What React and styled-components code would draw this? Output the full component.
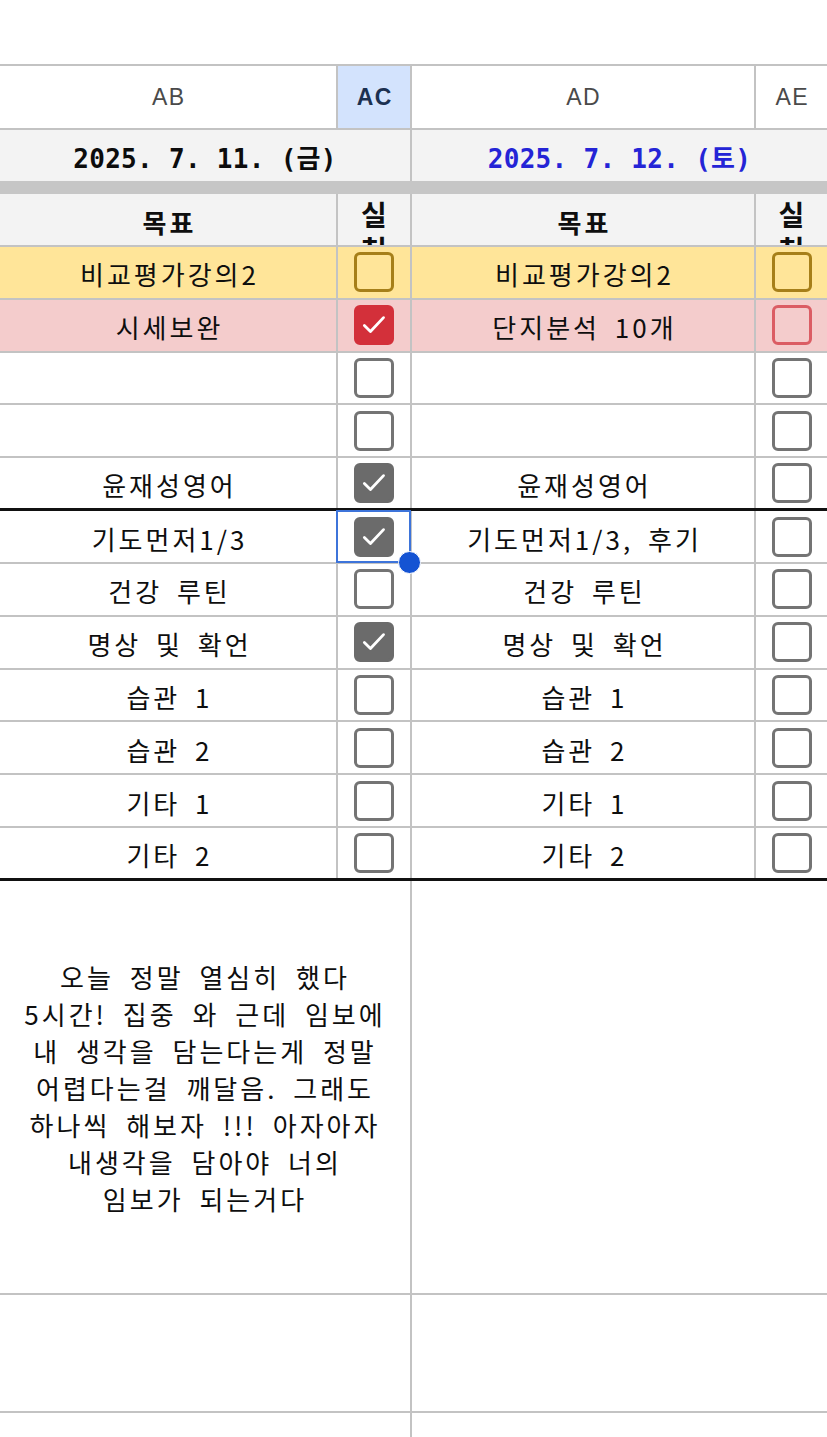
import React from 'react'
import styled, { createGlobalStyle } from 'styled-components'

const GRID = '#c3c3c3';

const GlobalStyle = createGlobalStyle`
  html, body {
    margin: 0;
    padding: 0;
    background: #fff;
  }
  body {
    font-family: "Noto Sans CJK KR", "Noto Sans", sans-serif;
    overflow: hidden;
  }
`;

const Sheet = styled.div`
  width: 827px;
  height: 1437px;
  padding-top: 64px;
  box-sizing: border-box;
  overflow: hidden;
  color: #0e0e0e;
`;

const Row = styled.div`
  display: grid;
  grid-template-columns: ${({ merged }) => (merged ? '412px 1fr' : '338px 74px 344px 1fr')};
  height: ${({ h }) => h}px;
  box-sizing: border-box;
  border-top: ${({ top }) => (top ? `2px solid ${GRID}` : 'none')};
  border-bottom: ${({ line }) =>
    line === 'black' ? '3px solid #111' : line === 'none' ? 'none' : `2px solid ${GRID}`};
  background: ${({ bg }) => bg || 'transparent'};
`;

const Cell = styled.div`
  position: relative;
  box-sizing: border-box;
  border-right: 2px solid ${GRID};
  display: flex;
  align-items: center;
  justify-content: center;
  background: ${({ bg }) => bg || 'transparent'};
  &:last-child {
    border-right: none;
  }
`;

const ColLetter = styled(Cell)`
  font-family: "Liberation Sans", Arial, sans-serif;
  font-size: 23px;
  letter-spacing: 1.5px;
  padding-left: 1.5px;
  color: ${({ active }) => (active ? '#1b3050' : '#4a4a4a')};
  font-weight: ${({ active }) => (active ? 700 : 400)};
  background: ${({ active }) => (active ? '#d3e3fd' : '#fff')};
`;

const DateCell = styled(Cell)`
  font-family: "DejaVu Sans Mono", "Noto Sans CJK KR", monospace;
  font-weight: 700;
  font-size: 26px;
  letter-spacing: 0.3px;
  padding-top: 2px;
  color: ${({ tone }) => tone || '#0c0c0c'};
  background: #f3f3f3;
`;

const Divider = styled.div`
  height: 13px;
  background: #c6c6c6;
`;

const Label = styled.span`
  font-size: 26px;
  letter-spacing: 3px;
  word-spacing: 6px;
  padding-left: 3px;
  padding-top: 3px;
  font-weight: ${({ bold }) => (bold ? 700 : 400)};
  white-space: nowrap;
`;

const StackCell = styled(Cell)`
  overflow: hidden;
  flex-direction: column;
  justify-content: flex-start;
  padding-top: 3px;
  font-size: 28px;
  font-weight: 700;
  line-height: 35px;
`;

const Note = styled.div`
  font-size: 26px;
  letter-spacing: 3px;
  word-spacing: 7px;
  line-height: 37px;
  text-align: center;
  white-space: pre-line;
  padding-top: 2px;
`;

const tones = {
  gray: { border: '#747474', fill: '#6b6b6b' },
  brown: { border: '#a67f19', fill: '#a67f19' },
  red: { border: '#db5d64', fill: '#d3303a' },
};

const Box = styled.div`
  width: 40px;
  height: 40px;
  box-sizing: border-box;
  border-radius: 6px;
  border: 3px solid ${({ tone, checked }) => (checked ? tones[tone].fill : tones[tone].border)};
  background: ${({ tone, checked }) => (checked ? tones[tone].fill : 'transparent')};
  display: flex;
  align-items: center;
  justify-content: center;
`;

const Selection = styled.div`
  position: absolute;
  left: -2px;
  top: -1px;
  right: -1px;
  bottom: -1px;
  border: 2px solid #3d74da;
  z-index: 2;
  pointer-events: none;
`;

const Handle = styled.div`
  position: absolute;
  right: -12px;
  bottom: -13px;
  width: 21px;
  height: 21px;
  border-radius: 50%;
  background: #1453d3;
  border: 1px solid #fff;
  z-index: 3;
`;

const Check = ({ tone = 'gray', checked }) => (
  <Box tone={tone} checked={checked}>
    {checked && (
      <svg width="36" height="36" viewBox="0 0 24 24" fill="none">
        <path d="M5.2 12.4l4.3 4.2 9.2-9.8" stroke="#fff" strokeWidth="2" strokeLinecap="round" strokeLinejoin="round" />
      </svg>
    )}
  </Box>
);

const rows = [
  { bg: '#ffe599', left: '비교평가강의2', lc: { tone: 'brown' }, right: '비교평가강의2', rc: { tone: 'brown' } },
  { bg: '#f4cccc', left: '시세보완', lc: { tone: 'red', checked: true }, right: '단지분석 10개', rc: { tone: 'red' } },
  { left: '', right: '' },
  { left: '', right: '' },
  { left: '윤재성영어', lc: { checked: true }, right: '윤재성영어', line: 'black' },
  { left: '기도먼저1/3', lc: { checked: true }, selected: true, right: '기도먼저1/3, 후기' },
  { left: '건강 루틴', right: '건강 루틴' },
  { left: '명상 및 확언', lc: { checked: true }, right: '명상 및 확언' },
  { left: '습관 1', right: '습관 1' },
  { left: '습관 2', right: '습관 2' },
  { left: '기타 1', right: '기타 1' },
  { left: '기타 2', right: '기타 2', line: 'black' },
];

const note = `오늘 정말 열심히 했다
5시간! 집중 와 근데 임보에
내 생각을 담는다는게 정말
어렵다는걸 깨달음. 그래도
하나씩 해보자 !!! 아자아자
내생각을 담아야 너의
임보가 되는거다`;

export default function App() {
  return (
    <Sheet>
      <GlobalStyle />
      <Row h={66} top>
        <ColLetter>AB</ColLetter>
        <ColLetter active>AC</ColLetter>
        <ColLetter>AD</ColLetter>
        <ColLetter>AE</ColLetter>
      </Row>
      <Row h={51} merged line="none">
        <DateCell>2025. 7. 11. (금)</DateCell>
        <DateCell tone="#2424d6">2025. 7. 12. (토)</DateCell>
      </Row>
      <Divider />
      <Row h={53} bg="#f3f3f3">
        <Cell><Label bold>목표</Label></Cell>
        <StackCell><span>실</span><span>천</span></StackCell>
        <Cell><Label bold>목표</Label></Cell>
        <StackCell><span>실</span><span>천</span></StackCell>
      </Row>
      {rows.map((r, i) => (
        <Row key={i} h={52.83} bg={r.bg} line={r.line}>
          <Cell><Label>{r.left}</Label></Cell>
          <Cell>
            <Check {...(r.lc || {})} />
            {r.selected && (
              <Selection>
                <Handle />
              </Selection>
            )}
          </Cell>
          <Cell><Label>{r.right}</Label></Cell>
          <Cell><Check {...(r.rc || {})} /></Cell>
        </Row>
      ))}
      <Row h={414} merged>
        <Cell><Note>{note}</Note></Cell>
        <Cell />
      </Row>
      <Row h={118} merged>
        <Cell />
        <Cell />
      </Row>
      <Row h={60} merged>
        <Cell />
        <Cell />
      </Row>
    </Sheet>
  );
}
